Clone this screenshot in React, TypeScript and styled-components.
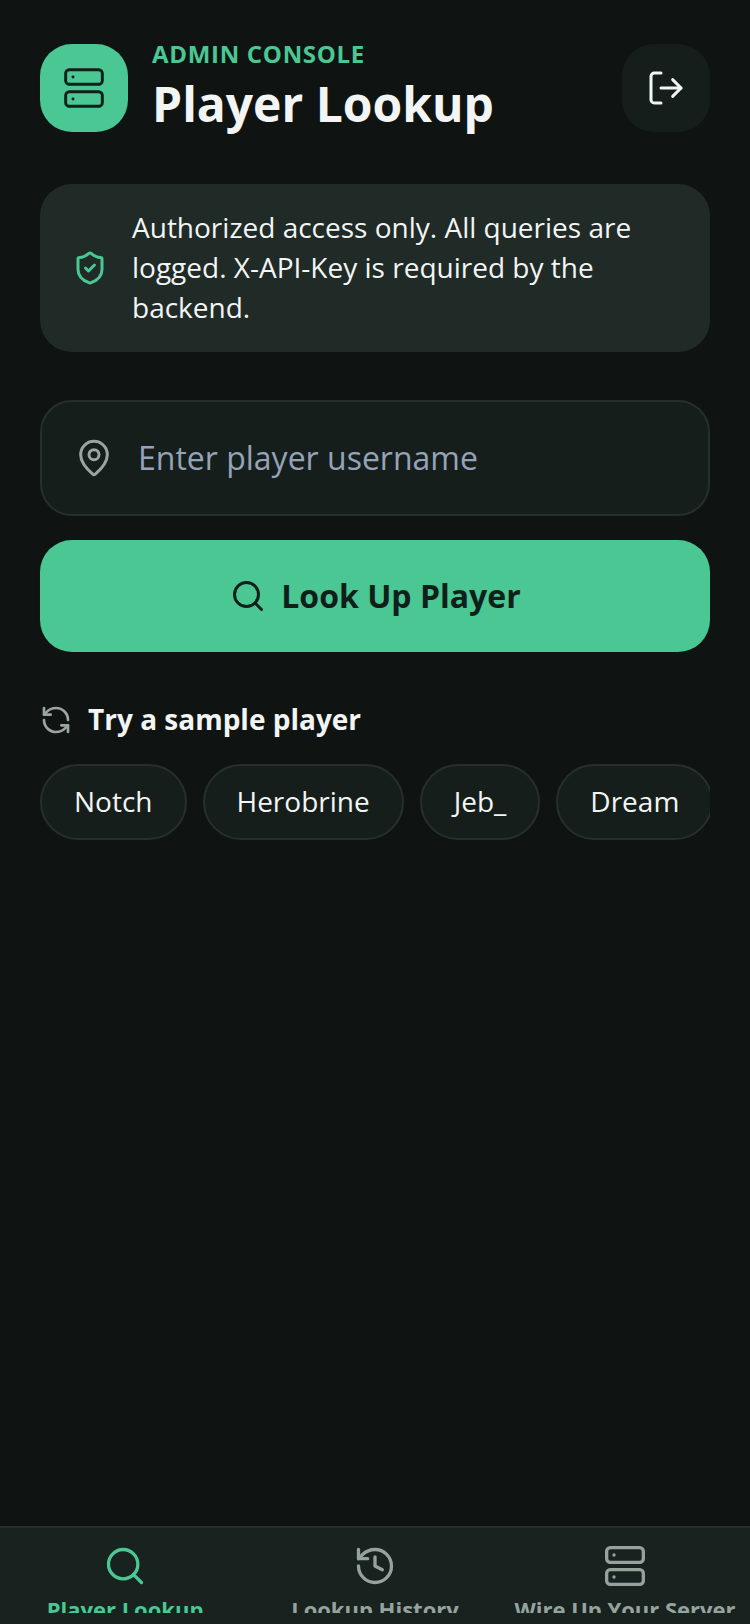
import styled, { createGlobalStyle } from "styled-components";
import { History, LogOut, MapPin, RefreshCcw, Search, Server, ShieldCheck } from "lucide-react";

const samples = ["Notch", "Herobrine", "Jeb_", "Dream"];

function App() {
  return (
    <Screen>
      <GlobalStyle />
      <Main>
        <Header>
          <Logo>
            <Server size={44} strokeWidth={1.6} />
          </Logo>
          <Titles>
            <Eyebrow>ADMIN CONSOLE</Eyebrow>
            <Title>Player Lookup</Title>
          </Titles>
          <LogoutButton>
            <LogOut size={40} strokeWidth={1.8} />
          </LogoutButton>
        </Header>

        <Notice>
          <ShieldCheck size={36} strokeWidth={2} color="#4ac793" />
          <NoticeText>
            Authorized access only. All queries are logged. X-API-Key is required by the backend.
          </NoticeText>
        </Notice>

        <InputBox>
          <MapPin size={40} strokeWidth={1.8} color="#9aa5a1" />
          <Placeholder>Enter player username</Placeholder>
        </InputBox>

        <LookupButton>
          <Search size={36} strokeWidth={2} />
          <span>Look Up Player</span>
        </LookupButton>

        <SampleHeader>
          <RefreshCcw size={32} strokeWidth={2} color="#9aa5a1" />
          <SampleTitle>Try a sample player</SampleTitle>
        </SampleHeader>

        <Chips>
          {samples.map((name) => (
            <Chip key={name}>{name}</Chip>
          ))}
        </Chips>
      </Main>

      <TabBar>
        <Tab $active>
          <Search size={44} strokeWidth={1.8} />
          <TabLabel>Player Lookup</TabLabel>
        </Tab>
        <Tab>
          <History size={44} strokeWidth={1.8} />
          <TabLabel>Lookup History</TabLabel>
        </Tab>
        <Tab>
          <Server size={44} strokeWidth={1.8} />
          <TabLabel>Wire Up Your Server</TabLabel>
        </Tab>
      </TabBar>
    </Screen>
  );
}

export default App;

const GlobalStyle = createGlobalStyle`
  html, body {
    margin: 0;
    padding: 0;
    background: #0f1413;
  }

  * {
    box-sizing: border-box;
  }

  svg {
    flex: none;
  }
`;

const Screen = styled.div`
  display: flex;
  flex-direction: column;
  width: 750px;
  height: 1624px;
  overflow: hidden;
  background: #0f1413;
  color: #f2f5f3;
  font-family: "Open Sans", sans-serif;
`;

const Main = styled.main`
  flex: 1;
  display: flex;
  flex-direction: column;
  padding: 44px 40px 0;
  min-height: 0;
`;

const Header = styled.header`
  display: flex;
  height: 88px;
`;

const Logo = styled.div`
  display: flex;
  align-items: center;
  justify-content: center;
  width: 88px;
  height: 88px;
  border-radius: 32px;
  background: #4ac793;
  color: #0f1f1a;
`;

const Titles = styled.div`
  flex: 1;
  display: flex;
  flex-direction: column;
  margin-left: 24px;
`;

const Eyebrow = styled.div`
  margin-top: -6px;
  font-size: 24px;
  line-height: 32px;
  font-weight: 700;
  letter-spacing: 0.7px;
  color: #4ac793;
`;

const Title = styled.h1`
  margin: 4px 0 0;
  font-size: 48px;
  line-height: 60px;
  font-weight: 700;
`;

const LogoutButton = styled.button`
  display: flex;
  align-items: center;
  justify-content: center;
  width: 88px;
  height: 88px;
  padding: 0;
  border: none;
  border-radius: 32px;
  background: #161e1c;
  color: #f2f5f3;
`;

const Notice = styled.section`
  display: flex;
  align-items: center;
  gap: 24px;
  margin-top: 52px;
  height: 168px;
  padding: 0 32px;
  border-radius: 32px;
  background: #202a27;
`;

const NoticeText = styled.p`
  margin: 0 0 2px;
  flex: 1;
  font-size: 28px;
  line-height: 40px;
`;

const InputBox = styled.div`
  display: flex;
  align-items: center;
  gap: 24px;
  margin-top: 48px;
  height: 116px;
  padding: 0 32px;
  border: 2px solid #272f2d;
  border-radius: 32px;
  background: #161e1c;
`;

const Placeholder = styled.span`
  margin-bottom: 2px;
  font-size: 32px;
  color: #94a3b8;
`;

const LookupButton = styled.button`
  display: flex;
  align-items: center;
  justify-content: center;
  gap: 15px;
  margin-top: 24px;
  height: 112px;
  padding: 0 0 0 1px;
  border: none;
  border-radius: 32px;
  background: #4ac793;
  color: #0f1f1a;
  font-family: inherit;
  font-size: 32px;
  font-weight: 700;

  span {
    margin-bottom: 2px;
  }
`;

const SampleHeader = styled.div`
  display: flex;
  align-items: center;
  gap: 16px;
  margin-top: 48px;
  height: 40px;
`;

const SampleTitle = styled.span`
  margin-bottom: 2px;
  font-size: 28px;
  font-weight: 700;
`;

const Chips = styled.div`
  display: flex;
  gap: 16px;
  margin-top: 24px;
  overflow: hidden;
`;

const Chip = styled.div`
  flex: none;
  display: flex;
  align-items: center;
  height: 76px;
  padding: 0 32px 2px;
  border: 2px solid #272f2d;
  border-radius: 38px;
  background: #161e1c;
  font-size: 28px;
`;

const TabBar = styled.nav`
  flex: none;
  display: flex;
  align-items: flex-start;
  height: 98px;
  padding-top: 16px;
  border-top: 2px solid #25302c;
  background: #18221f;
`;

const Tab = styled.div<{ $active?: boolean }>`
  flex: 1;
  display: flex;
  flex-direction: column;
  align-items: center;
  height: 69px;
  min-width: 0;
  overflow: hidden;
  color: ${(p) => (p.$active ? "#4ac793" : "#96a39d")};
`;

const TabLabel = styled.span`
  flex: none;
  margin-top: 6px;
  font-size: 22px;
  line-height: 30px;
  font-weight: 700;
  white-space: nowrap;
`;
